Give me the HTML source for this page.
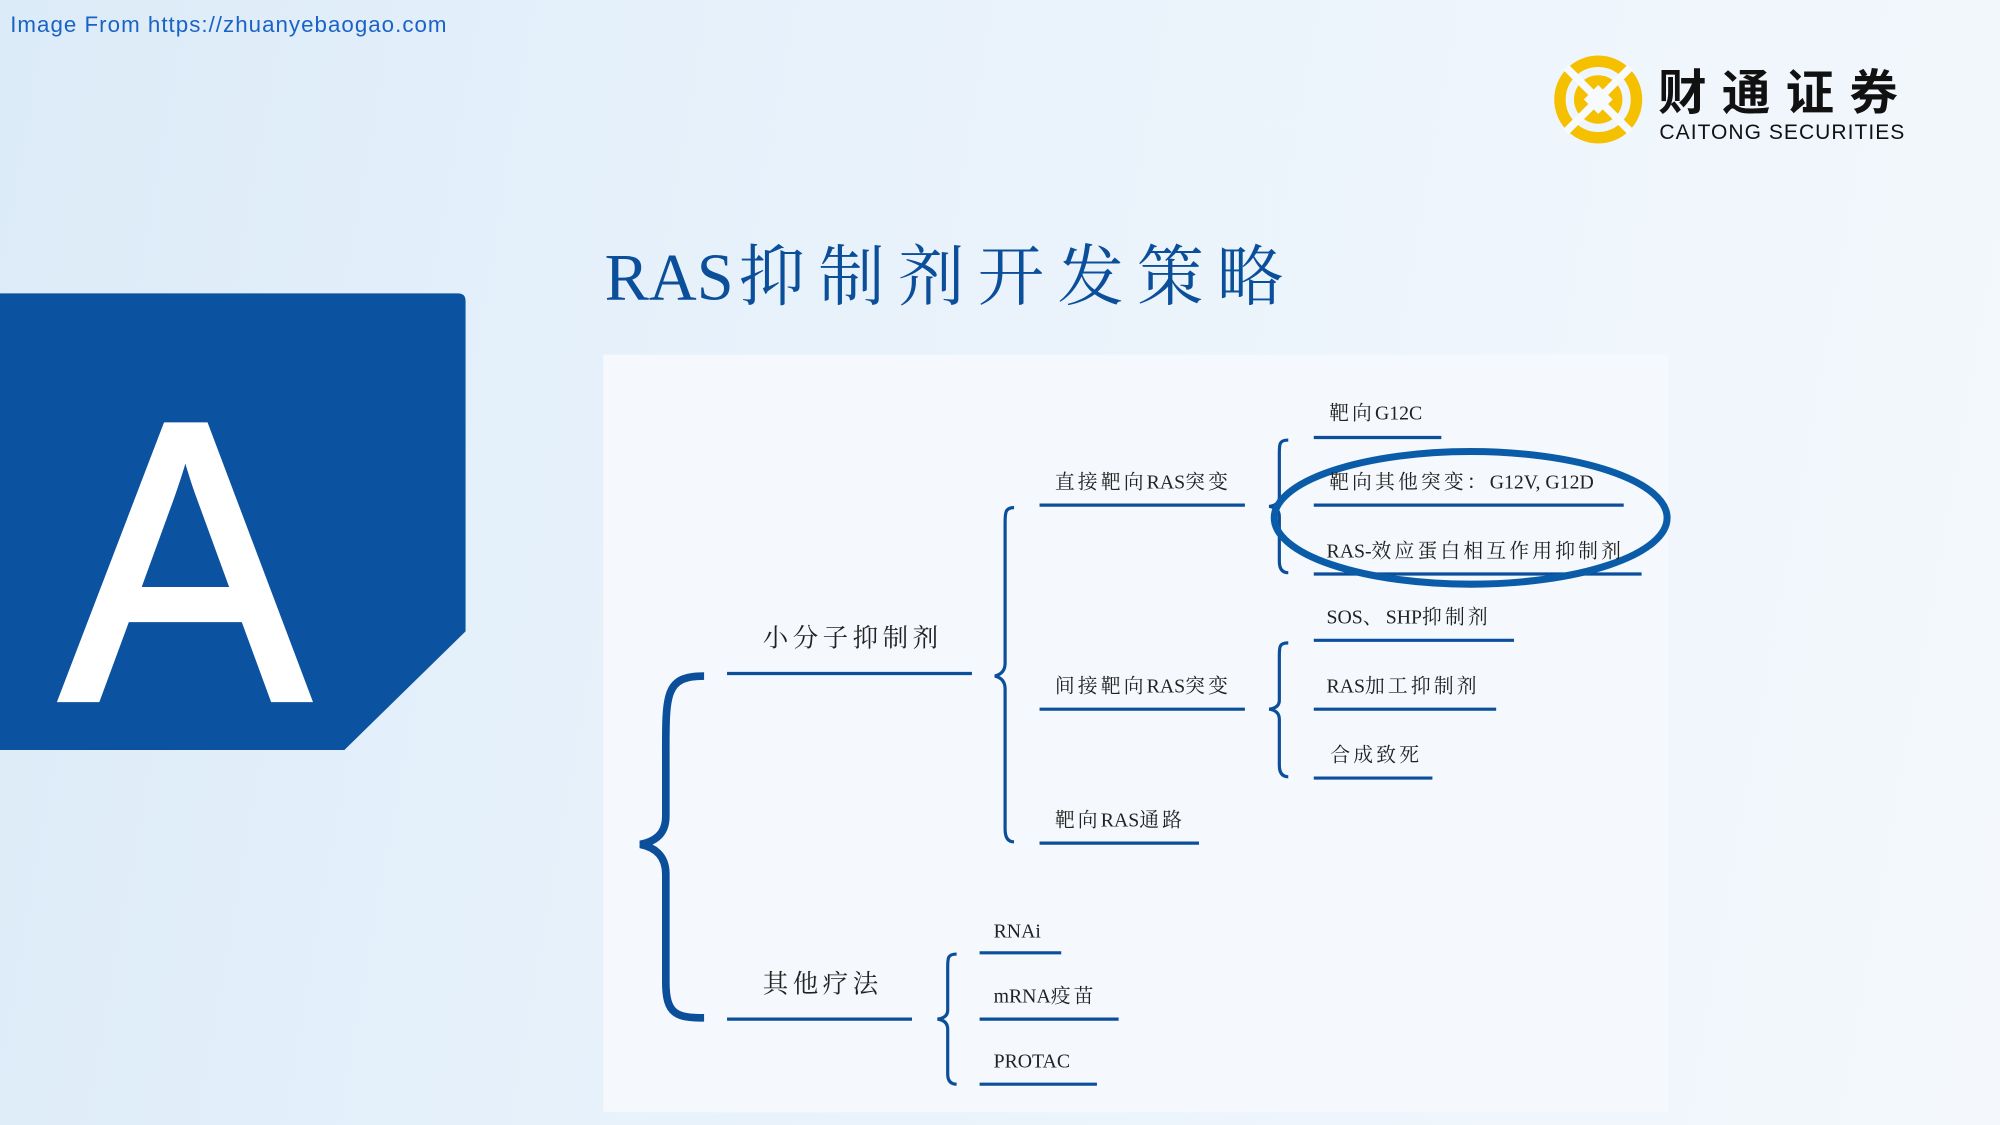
<!DOCTYPE html>
<html><head><meta charset="utf-8"><style>
html,body{margin:0;padding:0;width:2000px;height:1125px;overflow:hidden}
body{background:linear-gradient(100deg,#dcebf8 0%,#e8f2fb 40%,#f4f8fc 100%)}
svg{display:block}
.l{letter-spacing:0}
</style></head><body>
<svg width="2000" height="1125" viewBox="0 0 1568 882" xmlns="http://www.w3.org/2000/svg">
<text x="8" y="25" font-family="Liberation Sans, sans-serif" font-size="17.5" fill="#1a63c6" letter-spacing="0.8">Image From https://zhuanyebaogao.com</text>
<!-- logo -->
<g transform="translate(1253,78)">
<circle r="30" fill="none" stroke="#f5c000" stroke-width="9"/>
<circle r="19" fill="#f5c000"/>
<rect x="-8" y="-8" width="16" height="16" transform="rotate(45)" fill="#f8fbfd"/>
<rect x="-36" y="-3" width="72" height="6" fill="#f8fbfd" transform="rotate(45)"/>
<rect x="-36" y="-3" width="72" height="6" fill="#f8fbfd" transform="rotate(-45)"/>
</g>
<text x="1300" y="86" font-family="Liberation Sans, Noto Sans CJK SC, sans-serif" font-weight="bold" font-size="38" fill="#111" letter-spacing="12">财通证券</text>
<text x="1301" y="109" font-family="Liberation Sans, sans-serif" font-size="16.5" fill="#111" letter-spacing="0.8">CAITONG SECURITIES</text>
<!-- title -->
<text x="474" y="235" font-family="Liberation Serif, Noto Serif CJK SC, serif" font-size="52" fill="#0b4f9a"><tspan>RAS</tspan><tspan dx="4" letter-spacing="10.5">抑制剂开发策略</tspan></text>
<!-- blue panel -->
<path d="M0,230 H359 Q365,230 365,236 V495 L270,588 H0 Z" fill="#0b53a0"/>
<text x="0" y="0" transform="translate(145,548) scale(0.92,0.98)" text-anchor="middle" font-family="Liberation Sans, sans-serif" font-size="318" fill="#fff" stroke="#fff" stroke-width="5">A</text>
<!-- diagram panel -->
<rect x="473" y="278" width="835" height="594" fill="#f5f9fd"/>
<g stroke="#0b4f9a" fill="none" stroke-width="2.5">
<path d="M552,530 C520,530 522,545 522,600 V640 C522,655 512,660 502,662 C512,664 522,670 522,685 V770 C522,795 530,798 552,798" stroke-width="6"/>
<path d="M795,398 C788,398 788,402 788,410 V520 Q788,528 780,530 Q788,532 788,540 V650 Q788,660 795,660"/>
<path d="M1010,345 C1003,345 1003,348 1003,355 V390 Q1003,396 995,397 Q1003,398 1003,405 V440 Q1003,449 1010,449"/>
<path d="M1010,504 C1003,504 1003,507 1003,514 V549 Q1003,555 995,556 Q1003,557 1003,564 V600 Q1003,609 1010,609"/>
<path d="M750,748 C743,748 743,751 743,758 V792 Q743,798 735,799 Q743,800 743,807 V842 Q743,850 750,850"/>
<path d="M570,528H762M570,799H715M815,396H976M815,556H976M815,661H940M1030,343H1130M1030,396H1273M1030,450H1287M1030,502H1187M1030,556H1173M1030,610H1123M768,747H832M768,799H877M768,850H860"/>
<ellipse cx="1153" cy="406" rx="154" ry="52" stroke-width="5.5" stroke="#0b5ca8"/>
</g>
<g font-family="Liberation Serif, Noto Serif CJK SC, serif" fill="#222" font-size="15.5" letter-spacing="2.5">
<text x="598" y="507" font-size="20" letter-spacing="3.5">小分子抑制剂</text>
<text x="598" y="778" font-size="20" letter-spacing="3.5">其他疗法</text>
<text x="827" y="383">直接靶向<tspan class="l">RAS</tspan>突变</text>
<text x="827" y="543">间接靶向<tspan class="l">RAS</tspan>突变</text>
<text x="827" y="648">靶向<tspan class="l">RAS</tspan>通路</text>
<text x="1042" y="329">靶向<tspan class="l">G12C</tspan></text>
<text x="1042" y="383">靶向其他突变：<tspan class="l">G12V, G12D</tspan></text>
<text x="1040" y="437"><tspan class="l">RAS-</tspan>效应蛋白相互作用抑制剂</text>
<text x="1040" y="489"><tspan class="l">SOS</tspan>、<tspan class="l">SHP</tspan>抑制剂</text>
<text x="1040" y="543"><tspan class="l">RAS</tspan>加工抑制剂</text>
<text x="1043" y="597">合成致死</text>
<text x="779" y="735" class="l">RNAi</text>
<text x="779" y="786"><tspan class="l">mRNA</tspan>疫苗</text>
<text x="779" y="837" class="l">PROTAC</text>
</g>
</svg>
</body></html>
